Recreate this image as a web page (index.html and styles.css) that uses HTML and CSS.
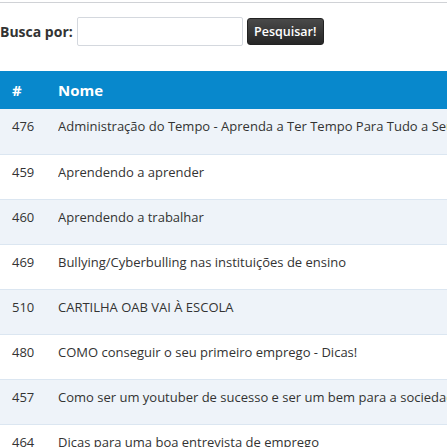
FILE: index.html
```html
<!DOCTYPE html>
<html>
<head>
<meta charset="utf-8">
<link rel="stylesheet" href="styles.css">
</head>
<body>
<div class="topline"></div>
<form class="search">
  <label class="search-label">Busca por:</label>
  <input class="search-input" type="text">
  <button class="search-btn" type="button">Pesquisar!</button>
</form>
<table class="list">
  <thead>
    <tr><th class="c-id">#</th><th>Nome</th></tr>
  </thead>
  <tbody>
    <tr><td class="c-id">476</td><td>Administração do Tempo - Aprenda a Ter Tempo Para Tudo a Seu Favor</td></tr>
    <tr><td class="c-id">459</td><td>Aprendendo a aprender</td></tr>
    <tr><td class="c-id">460</td><td>Aprendendo a trabalhar</td></tr>
    <tr><td class="c-id">469</td><td>Bullying/Cyberbulling nas instituições de ensino</td></tr>
    <tr><td class="c-id">510</td><td>CARTILHA OAB VAI À ESCOLA</td></tr>
    <tr><td class="c-id">480</td><td>COMO conseguir o seu primeiro emprego - Dicas!</td></tr>
    <tr><td class="c-id">457</td><td>Como ser um youtuber de sucesso e ser um bem para a sociedade</td></tr>
    <tr><td class="c-id">464</td><td>Dicas para uma boa entrevista de emprego</td></tr>
  </tbody>
</table>
</body>
</html>
```
FILE: styles.css
```css
html, body {
  margin: 0;
  padding: 0;
  background: #fff;
  overflow: hidden;
}
body {
  font-family: "Open Sans", "Noto Sans", sans-serif;
  color: #333;
  width: 447px;
}
.topline {
  height: 2px;
  border-bottom: 1px solid #d0d2d6;
}
.search {
  display: flex;
  align-items: center;
  height: 44px;
  margin-top: 6px;
  margin-bottom: 18px;
}
.search-label {
  font-weight: 700;
  font-size: 14px;
  color: #333;
  margin-right: 4px;
}
.search-input {
  width: 166px;
  height: 29px;
  box-sizing: border-box;
  border: 1px solid #d4d8de;
  border-radius: 2px;
  margin: 0 4px 0 0;
  padding: 0;
}
.search-btn {
  height: 27px;
  width: 77px;
  box-sizing: border-box;
  border: 1px solid #222;
  border-radius: 3px;
  background: linear-gradient(#4a4a4a, #262626);
  color: #fff;
  font-family: "Open Sans", sans-serif;
  font-size: 12.5px;
  font-weight: 600;
  padding: 0;
  margin: 0;
}
.list {
  border-collapse: collapse;
  width: 447px;
  table-layout: fixed;
}
.list th {
  background: #0888cc;
  color: #fff;
  text-align: left;
  font-size: 15px;
  font-weight: 700;
  height: 38px;
  padding: 0;
  white-space: nowrap;
}
.list th.c-id, .list td.c-id {
  width: 46px;
  padding-left: 12px;
}
.list td {
  font-size: 13px;
  color: #333;
  height: 45px;
  padding: 0 0 10px 0;
  box-sizing: border-box;
  white-space: nowrap;
  overflow: hidden;
  border-bottom: 1px solid #dbe6f1;
}
.list tbody tr:nth-child(odd) td {
  background: #eef3f9;
}
.list tbody tr:nth-child(even) td {
  background: #fff;
}
```
